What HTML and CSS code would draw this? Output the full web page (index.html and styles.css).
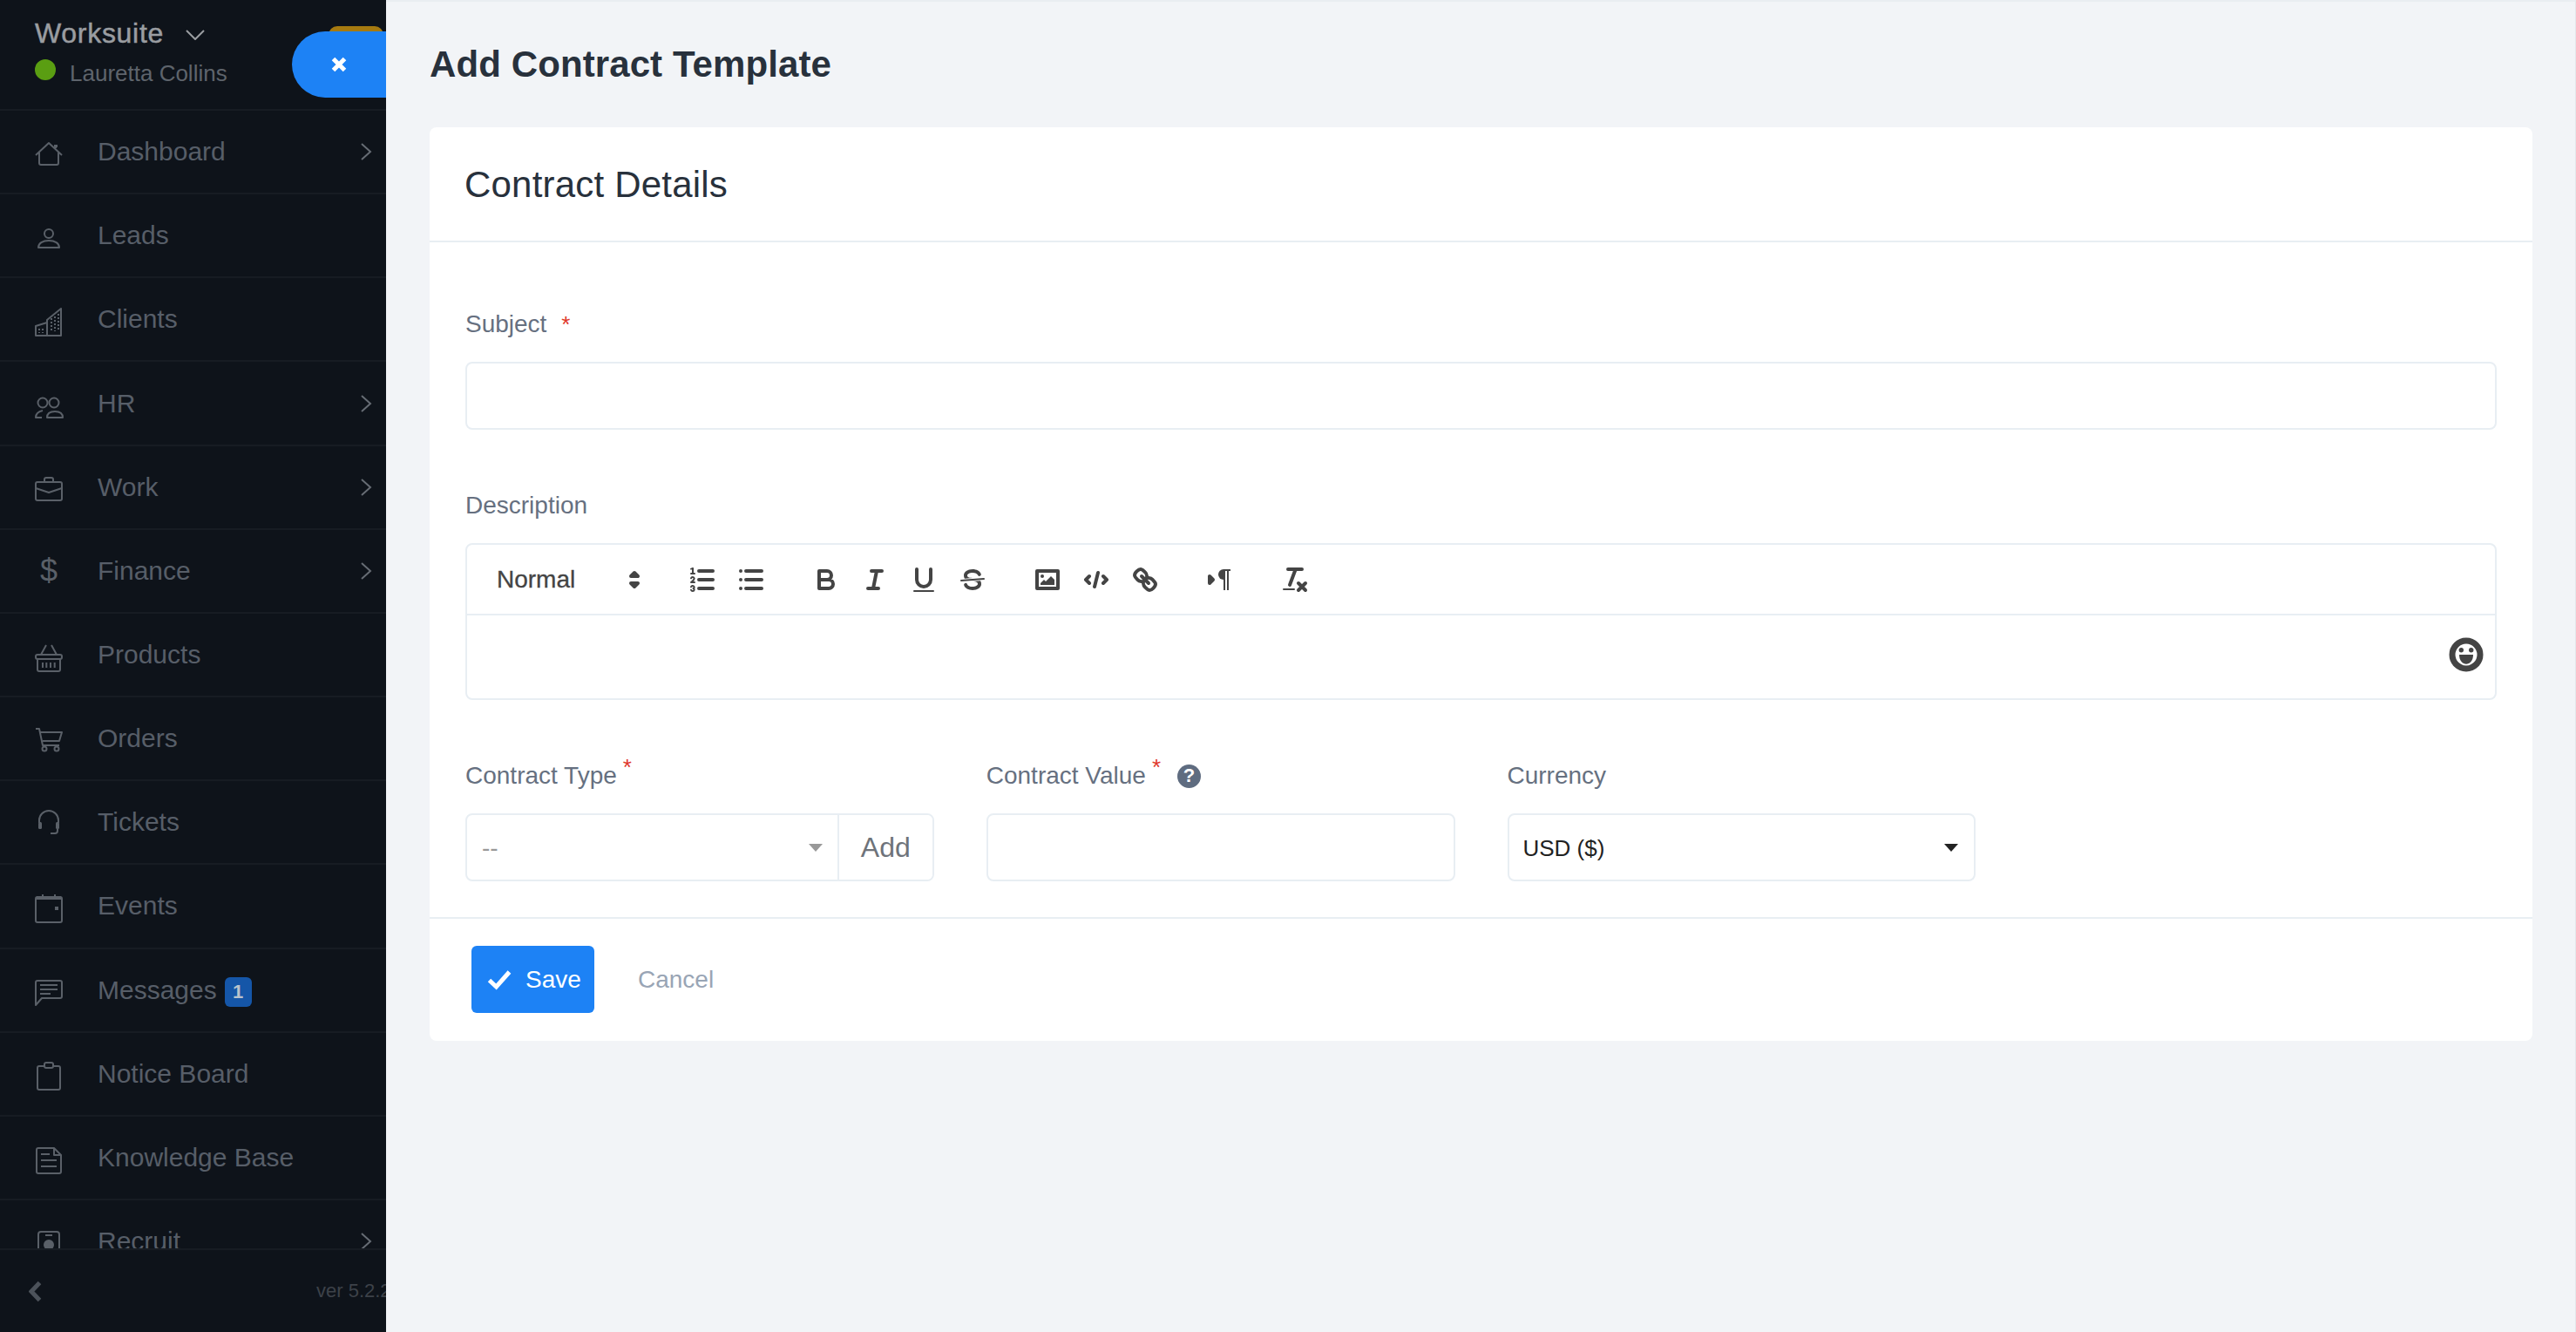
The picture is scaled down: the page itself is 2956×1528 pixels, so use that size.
FILE: index.html
```html
<!DOCTYPE html>
<html lang="en">
<head>
<meta charset="utf-8">
<title>Add Contract Template</title>
<link rel="stylesheet" href="styles.css">
</head>
<body>
<div class="app">
  <aside class="sidebar">
    <header class="side-head">
      <div class="brand"><span class="brand-name">Worksuite</span>
        <svg class="brand-caret" viewBox="0 0 22 12"><polyline points="1,1 11,11 21,1"/></svg>
      </div>
      <div class="user"><span class="dot"></span><span>Lauretta Collins</span></div>
      <span class="gold"></span>
      <button class="close-pill" type="button" aria-label="Close"><svg viewBox="0 0 18 18"><path d="M2.5 2.5 15.5 15.5M15.5 2.5 2.5 15.5"/></svg></button>
    </header>
    <nav class="nav">
      <a class="nav-row"><svg class="ico" viewBox="0 0 32 32"><path d="M1 20 16 6l15 14M5 17v12a2 2 0 0 0 2 2h18a2 2 0 0 0 2-2V17M24 8v4"/><path class="thick" d="M24 8v3"/></svg><span>Dashboard</span><svg class="chev" viewBox="0 0 14 22"><polyline points="2,2 12,11 2,20"/></svg></a>
      <a class="nav-row"><svg class="ico" viewBox="0 0 32 32"><circle cx="16" cy="14" r="5"/><path d="M4 30h24c0-5-5-8-12-8s-12 3-12 8z"/></svg><span>Leads</span></a>
      <a class="nav-row"><svg class="ico" viewBox="0 0 32 32"><path d="M1 35V24l13-4v15zM14 35V17L30 4v31H14"/><path class="dots" d="M19 15v15M23 13v17M27 10v20M5 27v5M9 27v5"/></svg><span>Clients</span></a>
      <a class="nav-row"><svg class="ico" viewBox="0 0 32 32"><circle cx="9" cy="15" r="5.5"/><circle cx="22" cy="15" r="5.5"/><path d="M14 32h18c0-5-4-7-9-7s-9 2-9 7zM9 24c-5 1-8 4-8 8h7"/></svg><span>HR</span><svg class="chev" viewBox="0 0 14 22"><polyline points="2,2 12,11 2,20"/></svg></a>
      <a class="nav-row"><svg class="ico" viewBox="0 0 32 32"><rect x="1" y="10" width="30" height="21" rx="2"/><path d="M11 10V7a2 2 0 0 1 2-2h6a2 2 0 0 1 2 2v3M1 17l15 5 15-5"/></svg><span>Work</span><svg class="chev" viewBox="0 0 14 22"><polyline points="2,2 12,11 2,20"/></svg></a>
      <a class="nav-row"><span class="ico ico-text">$</span><span>Finance</span><svg class="chev" viewBox="0 0 14 22"><polyline points="2,2 12,11 2,20"/></svg></a>
      <a class="nav-row"><svg class="ico" viewBox="0 0 32 32"><path d="M7 16 13 5M25 16 19 5"/><rect x="1" y="16" width="30" height="5" rx="2"/><path d="M3 21v12a2 2 0 0 0 2 2h22a2 2 0 0 0 2-2V21M9 25v6M13.300 25v6M18 25v6M22.700 25v6"/></svg><span>Products</span></a>
      <a class="nav-row"><svg class="ico" viewBox="0 0 32 32"><path d="M1 5h4l4 19h19M6 9h25l-3 10H9"/><circle cx="11" cy="28" r="2.500"/><circle cx="25" cy="28" r="2.500"/></svg><span>Orders</span></a>
      <a class="nav-row"><svg class="ico" viewBox="0 0 32 32"><path d="M5 17v-3a11 11 0 0 1 22 0v3M26 24v2a3 3 0 0 1-3 3h-5"/><rect class="solid" x="4" y="16" width="4" height="8" rx="1.500"/><rect class="solid" x="24" y="16" width="4" height="8" rx="1.500"/></svg><span>Tickets</span></a>
      <a class="nav-row"><svg class="ico" viewBox="0 0 32 32"><rect x="1" y="6" width="30" height="29" rx="2"/><path class="thick" d="M2 7h28"/><path d="M9 3v3M23 3v3"/><rect class="solid" x="23" y="17" width="4" height="4"/></svg><span>Events</span></a>
      <a class="nav-row"><svg class="ico" viewBox="0 0 32 32"><path d="M3 5h26a2 2 0 0 1 2 2v16a2 2 0 0 1-2 2H8l-7 8V7a2 2 0 0 1 2-2zM6 10h20M6 15h20M6 20h12"/></svg><span>Messages</span><span class="badge">1</span></a>
      <a class="nav-row"><svg class="ico" viewBox="0 0 32 32"><path d="M11 7H5a2 2 0 0 0-2 2v23a2 2 0 0 0 2 2h22a2 2 0 0 0 2-2V9a2 2 0 0 0-2-2h-6"/><rect x="11" y="3" width="10" height="6" rx="2"/></svg><span>Notice Board</span></a>
      <a class="nav-row"><svg class="ico" viewBox="0 0 32 32"><path d="M4 5h18l8 8v19a2 2 0 0 1-2 2H4a2 2 0 0 1-2-2V7a2 2 0 0 1 2-2zM22 5v8h8M7 12h10M7 19h18M7 26h18"/></svg><span>Knowledge Base</span></a>
      <a class="nav-row"><svg class="ico" viewBox="0 0 32 32"><rect x="4" y="5" width="24" height="30" rx="3"/><path d="M12 9h8"/><circle class="solid" cx="16" cy="20" r="6"/></svg><span>Recruit</span><svg class="chev" viewBox="0 0 14 22"><polyline points="2,2 12,11 2,20"/></svg></a>
    </nav>
    <footer class="side-foot">
      <svg class="back" viewBox="0 0 15 25"><polyline points="12.500,2.500 3,12.500 12.500,22.500"/></svg>
      <span class="version">ver 5.2.21</span>
    </footer>
  </aside>

  <main class="main">
    <h1 class="page-title">Add Contract Template</h1>
    <section class="card">
      <h2 class="card-title">Contract Details</h2>
      <div class="card-body">
        <div class="field">
          <label class="label">Subject <span class="star star-inline">*</span></label>
          <input class="input" type="text">
        </div>
        <div class="field">
          <label class="label">Description</label>
          <div class="editor">
            <div class="toolbar">
              <div class="picker"><span>Normal</span>
                <svg viewBox="0 0 18 18"><polygon points="7 11 9 13 11 11 7 11"/><polygon points="7 7 9 5 11 7 7 7"/></svg>
              </div>
              <div class="tool-group">
                <svg class="tool" viewBox="0 0 18 18"><path d="M7 4h8M7 9h8M7 14h8"/><path class="thin" d="M2.500 5.500h2"/><path class="fill" d="M3.500 6A.5.5 0 0 1 3 5.500V3.085l-.276.138A.5.5 0 0 1 2.053 3c-.124-.247-.023-.324.224-.447l1-.5A.5.5 0 0 1 4 2.500v3A.5.5 0 0 1 3.500 6z"/><path class="thin" d="M4.500 10.500h-2c0-.234 1.850-1.076 1.850-2.234A.959.959 0 0 0 2.500 8.156M2.500 14.846a.959.959 0 0 0 1.850-.109A.7.7 0 0 0 3.750 14a.688.688 0 0 0 .6-.736.959.959 0 0 0-1.850-.109"/></svg>
                <svg class="tool" viewBox="0 0 18 18"><path d="M6 4h9M6 9h9M6 14h9M3 4h0M3 9h0M3 14h0"/></svg>
              </div>
              <div class="tool-group">
                <svg class="tool" viewBox="0 0 18 18"><path d="M5 4h4.500A2.500 2.500 0 0 1 12 6.500 2.500 2.500 0 0 1 9.500 9H5V4zM5 9h5.500a2.500 2.500 0 0 1 2.500 2.500 2.500 2.500 0 0 1-2.500 2.500H5V9z"/></svg>
                <svg class="tool" viewBox="0 0 18 18"><path d="M7 4h6M5 14h6M8 14l2-10"/></svg>
                <svg class="tool" viewBox="0 0 18 18"><path d="M5 3v6a4 4 0 0 0 4 4 4 4 0 0 0 4-4V3"/><rect class="fill" x="3" y="15" width="12" height="1" rx=".5"/></svg>
                <svg class="tool" viewBox="0 0 18 18"><path class="thin" d="M15.500 8.500l-13 1"/><path class="fill" d="M9.007 8C6.542 7.791 6 7.519 6 6.500 6 5.792 7.283 5 9 5c1.571 0 2.765.679 2.969 1.309a1 1 0 0 0 1.900-.617C13.356 4.106 11.354 3 9 3 6.200 3 4 4.538 4 6.500a3.200 3.200 0 0 0 .5 1.843z"/><path class="fill" d="M8.984 10C11.457 10.208 12 10.479 12 11.500c0 .708-1.283 1.500-3 1.500-1.571 0-2.765-.679-2.969-1.309a1 1 0 1 0-1.900.617C4.644 13.894 6.646 15 9 15c2.800 0 5-1.538 5-3.500a3.200 3.200 0 0 0-.5-1.843z"/></svg>
              </div>
              <div class="tool-group">
                <svg class="tool" viewBox="0 0 18 18"><rect x="3" y="4" width="12" height="10"/><circle class="fill" cx="6" cy="7" r="1"/><polygon class="fill" points="5 12 5 11 7 9 8 10 11 7 13 9 13 12 5 12"/></svg>
                <svg class="tool" viewBox="0 0 18 18"><path d="M5 7 3 9l2 2M13 7l2 2-2 2M10 5 8 13"/></svg>
                <svg class="tool" viewBox="0 0 18 18"><path d="M7 7l4 4M8.900 4.577a3.476 3.476 0 0 1 .36 4.679A3.476 3.476 0 0 1 4.577 8.900C3.185 7.500 2.035 6.400 4.217 4.217S7.500 3.185 8.900 4.577zM13.423 9.100a3.476 3.476 0 0 0-4.679-.36 3.476 3.476 0 0 0 .36 4.679c1.392 1.392 2.500 2.542 4.679.36S14.815 10.500 13.423 9.100z"/></svg>
              </div>
              <div class="tool-group">
                <svg class="tool" viewBox="0 0 18 18"><polygon class="fill-stroke" points="3 11 5 9 3 7 3 11"/><path class="fill" d="M11 3a3 3 0 0 0 0 6h1V3h-1z"/><path class="fill" d="M15 3h-4v1h4z"/><rect class="fill" x="11" y="4" width="1" height="11"/><rect class="fill" x="13" y="4" width="1" height="11"/></svg>
              </div>
              <div class="tool-group">
                <svg class="tool" viewBox="0 0 18 18"><path d="M5 3h8M6 12 9.350 3M11 11l4 4M15 11l-4 4"/><rect class="fill" x="2" y="14" width="7" height="1" rx=".5"/></svg>
              </div>
            </div>
            <div class="editor-body">
              <svg class="emoji" viewBox="-20 -20 40 40"><circle r="16" class="ring"/><circle class="fill" cx="-5.700" cy="-5.300" r="2.700"/><circle class="fill" cx="5.700" cy="-5.300" r="2.700"/><path class="fill" d="M-8 0H8C8 7 4 10.800 0 10.800S-8 7-8 0z"/></svg>
            </div>
          </div>
        </div>
        <div class="field-row">
          <div class="cell">
            <label class="label">Contract Type<span class="star">*</span></label>
            <div class="group">
              <div class="select select-muted"><span>--</span><i class="tri tri-muted"></i></div>
              <button class="add" type="button">Add</button>
            </div>
          </div>
          <div class="cell">
            <label class="label">Contract Value<span class="star">*</span><span class="help">?</span></label>
            <input class="input" type="text">
          </div>
          <div class="cell">
            <label class="label">Currency</label>
            <div class="select select-box"><span>USD ($)</span><i class="tri"></i></div>
          </div>
        </div>
      </div>
      <div class="card-foot">
        <button class="save" type="button"><svg viewBox="0 0 28 24"><polyline points="2.500,12.500 10.500,20 25.500,3"/></svg><span>Save</span></button>
        <a class="cancel">Cancel</a>
      </div>
    </section>
  </main>
</div>
</body>
</html>
```

FILE: styles.css
```css
* { box-sizing: border-box; }
html, body { margin: 0; height: 100%; overflow: hidden; }
body { font-family: "Liberation Sans", Arial, sans-serif; color: #28313c; background: #f2f4f7; }
.app { display: flex; height: 100vh; }

/* sidebar */
.sidebar { position: relative; flex: 0 0 443px; width: 443px; display: flex; flex-direction: column; background: #0e131a; overflow: hidden; }
.side-head { flex: 0 0 127px; padding: 18px 0 0 40px; border-bottom: 2px solid #171c23; }
.brand { display: flex; align-items: center; height: 40px; gap: 25px; }
.brand-name { font-size: 32px; color: #9a9da1; letter-spacing: .7px; -webkit-text-stroke: .5px #9a9da1; }
.brand-caret { width: 22px; height: 12px; margin-top: 4px; fill: none; stroke: #9a9da1; stroke-width: 2; }
.user { display: flex; align-items: center; gap: 16px; height: 38px; margin-top: 7px; font-size: 26px; color: #5e646c; }
.dot { width: 24px; height: 24px; border-radius: 50%; background: #5a9e12; margin-bottom: 8px; }
.gold { position: absolute; left: 377px; top: 30px; width: 63px; height: 30px; border-radius: 10px; background: #a67a10; }
.close-pill { position: absolute; left: 335px; top: 36px; width: 108px; height: 76px; padding: 0 0 0 45px; border: 0; border-radius: 38px 0 0 38px; background: #1d82f5; display: flex; align-items: center; }
.close-pill svg { width: 18px; height: 18px; fill: none; stroke: #fff; stroke-width: 5; }

.nav { flex: 1; min-height: 0; overflow: hidden; }
.nav-row { display: flex; align-items: center; height: 96.17px; padding: 0 16px 0 40px; border-bottom: 2px solid #171c23; font-size: 30px; color: #575e68; }
.ico { flex: 0 0 32px; width: 32px; height: 32px; margin-right: 40px; overflow: visible; fill: none; stroke: #5a6068; stroke-width: 2; stroke-linejoin: round; }
.ico .thick { stroke-width: 4; }
.ico .dots { stroke-width: 2; stroke-dasharray: 2 2; }
.ico .solid { fill: #5a6068; stroke: none; }
.ico-text { font-size: 36px; line-height: 32px; text-align: center; color: #5a6068; }
.chev { width: 14px; height: 22px; margin-left: auto; fill: none; stroke: #666c74; stroke-width: 2; }
.badge { display: flex; align-items: center; justify-content: center; width: 31px; height: 34px; margin: 4px 0 0 9px; border-radius: 6px; background: #1556a8; color: #b9c2cc; font-size: 22px; font-weight: 700; }

.side-foot { flex: 0 0 96px; display: flex; align-items: center; padding-left: 33px; border-top: 2px solid #171c23; }
.back { flex: 0 0 15px; width: 15px; height: 25px; margin-right: 315px; fill: none; stroke: #4c525a; stroke-width: 5; }
.version { flex-shrink: 0; font-size: 22px; color: #3d4249; white-space: nowrap; }

/* main */
.main { flex: 1; min-width: 0; padding: 47px 49px 0 50px; border-top: 2px solid #e9edf1; border-right: 1px solid #e4e7eb; background: #f2f4f7; }
.page-title { margin: 0 0 47px; font-size: 42px; line-height: 50px; font-weight: 700; letter-spacing: .1px; color: #28313c; }
.card { background: #fff; border-radius: 8px; }
.card-title { display: flex; align-items: center; height: 132px; margin: 0; padding: 2px 0 0 40px; border-bottom: 2px solid #e8eef3; font-size: 42px; font-weight: 400; letter-spacing: .2px; color: #28313c; }
.card-body { padding: 73px 41px 41px; }
.field { margin-bottom: 66px; }
.label { display: flex; align-items: center; height: 40px; margin-bottom: 24px; padding-top: 2px; font-size: 28px; color: #667080; white-space: pre; }
.star { align-self: flex-start; margin: -6px 0 0 7px; font-size: 26px; line-height: 30px; color: #e0372a; }
.star-inline { align-self: center; margin: 0 0 0 9px; }
.input { display: block; width: 100%; height: 78px; padding: 0 18px; border: 2px solid #e8eef3; border-radius: 8px; background: #fff; outline: none; font: inherit; }

.editor { height: 180px; border: 2px solid #e8eef3; border-radius: 8px; }
.toolbar { display: flex; align-items: center; height: 81px; padding: 0 16px; border-bottom: 2px solid #e8eef3; }
.picker { flex: 0 0 196px; display: flex; align-items: center; justify-content: space-between; padding: 0 2px 0 18px; font-size: 28px; color: #444; -webkit-text-stroke: .3px #444; }
.picker svg { width: 36px; height: 36px; fill: #444; stroke: #444; stroke-width: 2; stroke-linejoin: round; }
.tool-group { display: flex; margin-left: 30px; }
.tool { width: 36px; height: 36px; margin: 0 10px; fill: none; stroke: #444; stroke-width: 2; stroke-linecap: round; stroke-linejoin: round; }
.tool .thin { stroke-width: 1; }
.tool .fill { fill: #444; stroke: none; }
.tool .fill-stroke { fill: #444; }
.editor-body { display: flex; justify-content: flex-end; align-items: center; height: 95px; padding: 0 13px 5px 0; }
.emoji { width: 40px; height: 40px; }
.emoji .ring { fill: none; stroke: #444; stroke-width: 7; }
.emoji .fill { fill: #444; }

.field-row { display: grid; grid-template-columns: repeat(4, 1fr); column-gap: 60px; }
.help { display: flex; align-items: center; justify-content: center; width: 27px; height: 27px; margin: 0 0 0 19px; border-radius: 50%; background: #5f6c80; color: #fff; font-size: 22px; font-weight: 700; }
.group { display: flex; height: 78px; border: 2px solid #e8eef3; border-radius: 8px; overflow: hidden; }
.select { display: flex; align-items: center; }
.select-muted { flex: 1; padding: 2px 17px 0 17px; border-right: 2px solid #e8eef3; color: #999; font-size: 28px; }
.select-box { height: 78px; padding: 2px 18px 0 16px; border: 2px solid #e8eef3; border-radius: 8px; font-size: 26px; color: #222; }
.tri { width: 0; height: 0; margin-left: auto; margin-top: -2px; border-style: solid; border-width: 9px 8.500px 0; border-color: #222 transparent transparent; }
.tri-muted { border-top-color: #999; }
.add { flex: 0 0 107px; padding: 0; border: 0; background: #fff; font: inherit; font-size: 32px; color: #6e737a; }

.card-foot { display: flex; align-items: center; padding: 31px 48px 32px; border-top: 2px solid #e8eef3; }
.save { display: flex; align-items: center; gap: 16px; width: 141px; height: 77px; padding: 0 0 0 18px; border: 0; border-radius: 6px; background: #1d82f5; color: #fff; font: inherit; font-size: 28px; }
.save svg { flex: 0 0 28px; width: 28px; height: 24px; fill: none; stroke: #fff; stroke-width: 5; }
.cancel { margin-left: 50px; font-size: 28px; color: #99a5b5; }
```
